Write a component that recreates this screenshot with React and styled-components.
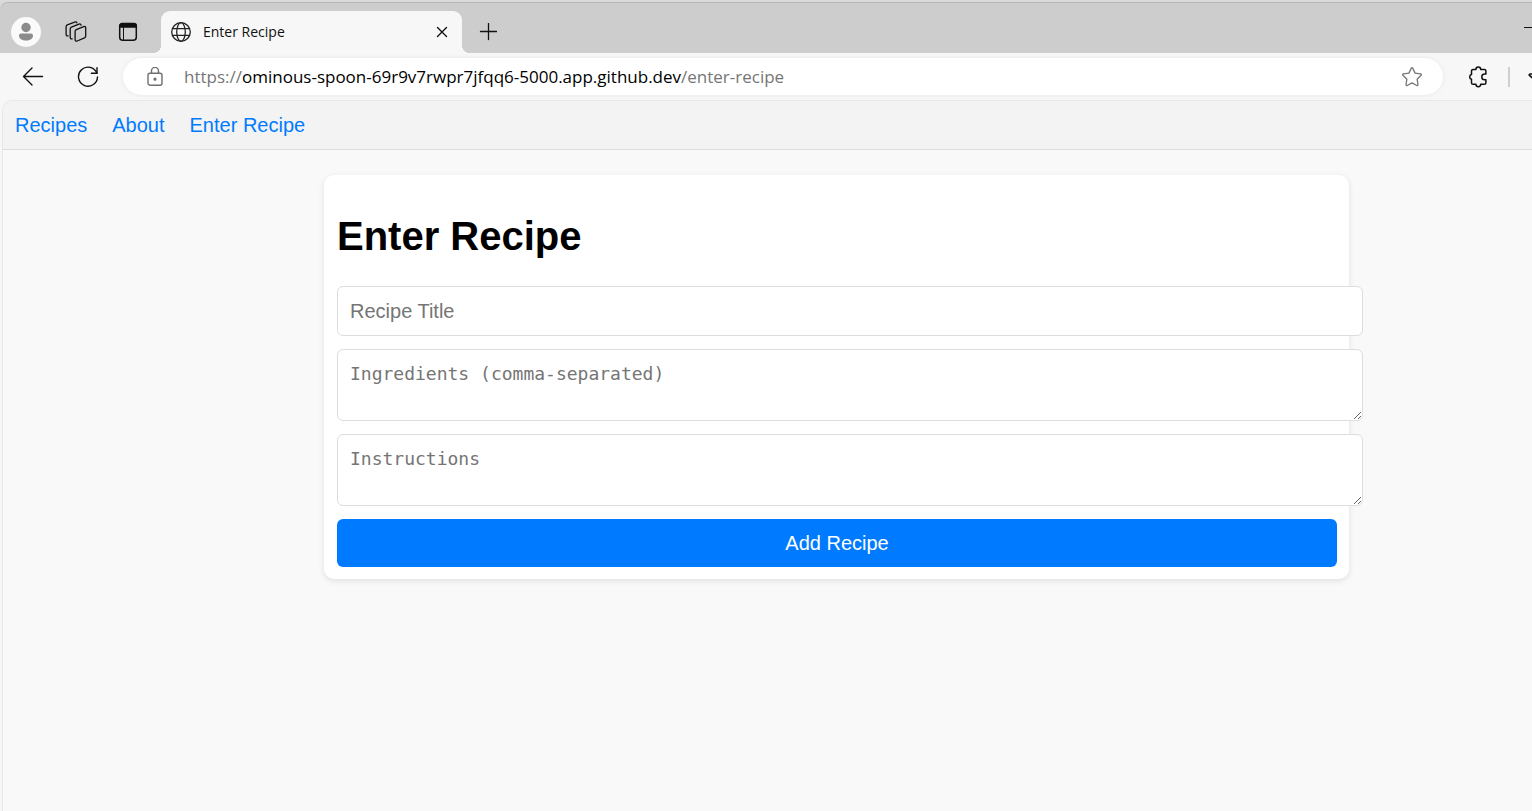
import React from "react";
import styled, { createGlobalStyle } from "styled-components";

const GlobalStyle = createGlobalStyle`
  body {
    margin: 0;
    overflow-x: hidden;
    background: #f7f7f7;
    font-family: "Liberation Sans", Arial, sans-serif;
  }
`;

const Browser = styled.div`
  display: flex;
  flex-direction: column;
  min-height: 100vh;
  overflow: hidden;
`;

const TopEdge = styled.div`
  padding-top: 2px;
  background: #dadada;
`;

const TabStrip = styled.div`
  box-sizing: border-box;
  display: flex;
  align-items: flex-end;
  height: 51px;
  padding-left: 11px;
  border-top: 1px solid #b6b6b6;
  border-top-left-radius: 8px;
  background: #cdcdcd;
`;

const IconButton = styled.button`
  display: flex;
  flex: none;
  align-items: center;
  justify-content: center;
  width: ${(p) => p.$width || 30}px;
  height: ${(p) => p.$height || 42}px;
  padding: 0;
  border: 0;
  background: transparent;
  color: ${(p) => p.$color || "#111"};

  svg {
    display: block;
    flex: none;
  }
`;

const StripButtons = styled.div`
  display: flex;
  gap: 22px;
`;

const Tab = styled.div`
  position: relative;
  box-sizing: border-box;
  display: flex;
  align-items: center;
  width: 301px;
  height: 42px;
  margin-left: 16px;
  padding: 0 5px 0 9px;
  border-radius: 9px 9px 0 0;
  background: #f7f7f7;

  &::before,
  &::after {
    content: "";
    position: absolute;
    bottom: 0;
    width: 8px;
    height: 8px;
  }
  &::before {
    right: 100%;
    background: radial-gradient(circle at 0 0, #cdcdcd 8px, #f7f7f7 8px);
  }
  &::after {
    left: 100%;
    background: radial-gradient(circle at 100% 0, #cdcdcd 8px, #f7f7f7 8px);
  }
`;

const TabTitle = styled.span`
  flex: 1;
  margin-left: 11px;
  font: 14px/20px "Open Sans", "Noto Sans", sans-serif;
  color: #111;
`;

const WindowControls = styled.div`
  display: flex;
  margin-left: auto;
  margin-right: -2px;
`;

const Toolbar = styled.div`
  display: flex;
  align-items: center;
  height: 47px;
  padding-left: 18px;
`;

const ToolbarButtons = styled.div`
  display: flex;
  gap: 25px;
`;

const AddressBar = styled.div`
  display: flex;
  flex: 1;
  align-items: center;
  height: 37px;
  margin: 0 20px;
  padding: 0 16px 0 17px;
  border-radius: 19px;
  background: #fff;
  box-shadow: 0 0 5px rgba(0, 0, 0, 0.07);
`;

const Address = styled.div`
  flex: 1;
  margin-left: 14px;
  font: 17px/24px "Open Sans", "Noto Sans", sans-serif;
  color: #767676;
  white-space: nowrap;
`;

const Host = styled.span`
  color: #000;
`;

const Divider = styled.span`
  width: 2px;
  height: 20px;
  margin-left: 15px;
  margin-right: 18px;
  background: #cfcfcf;
`;

const Page = styled.div`
  flex: 1;
  margin-left: 2px;
  border: solid #e8e8e8;
  border-width: 1px 0 0 1px;
  border-top-left-radius: 10px;
  overflow: hidden;
  background: #f9f9f9;
`;

const Nav = styled.nav`
  display: flex;
  gap: 25px;
  padding: 12px;
  border-bottom: 1px solid #ddd;
  background: #f3f3f3;
`;

const NavLink = styled.a`
  font-size: 20px;
  line-height: 24px;
  color: #007bff;
  text-decoration: none;
`;

/* The page is wider than the visible part of the window, so its centre lies right of the middle. */
const Content = styled.main`
  margin-right: -138px;
  padding: 25px 0;
`;

const Card = styled.section`
  box-sizing: border-box;
  max-width: 1025px;
  margin: 0 auto;
  padding: 12px 12px 12px 13px;
  border-radius: 10px;
  background: #fff;
  box-shadow: 0 2px 6px rgba(0, 0, 0, 0.1);
`;

const Title = styled.h1`
  margin: 26px 0 27px;
  font-size: 40px;
  line-height: 46px;
  color: #000;
`;

const Form = styled.form`
  display: flex;
  flex-direction: column;
  align-items: flex-start;
  gap: 13px;
`;

const TextInput = styled.input`
  width: 100%;
  height: 24px;
  padding: 12px;
  border: 1px solid #ddd;
  border-radius: 6px;
  background: #fff;
  font: 20px/24px "Liberation Sans", Arial, sans-serif;

  &::placeholder {
    color: #757575;
  }
`;

const TextArea = styled.textarea`
  display: block;
  width: 100%;
  height: 46px;
  padding: 12px;
  border: 1px solid #ddd;
  border-radius: 6px;
  background: #fff;
  font: 18px/23px "DejaVu Sans Mono", monospace;

  &::placeholder {
    color: #757575;
  }
`;

const SubmitButton = styled.button`
  width: 100%;
  height: 48px;
  padding: 0 12px;
  border: 0;
  border-radius: 6px;
  background: #007bff;
  color: #fff;
  font: 20px/24px "Liberation Sans", Arial, sans-serif;
`;

const Svg = ({ width = 24, height = 24, stroke = 1.4, children }) => (
  <svg
    width={width}
    height={height}
    viewBox={`0 0 ${width} ${height}`}
    fill="none"
    stroke="currentColor"
    strokeWidth={stroke}
    strokeLinecap="round"
    strokeLinejoin="round"
    aria-hidden="true"
  >
    {children}
  </svg>
);

const ProfileIcon = () => (
  <Svg width={30} height={30} stroke={0}>
    <circle cx="15" cy="15" r="15" fill="#fafafa" />
    <circle cx="15" cy="10.5" r="4.7" fill="#8b8b8b" />
    <path d="M10 16.500h10a2 2 0 0 1 2 2c0 3.200-3 5-7 5s-7-1.800-7-5a2 2 0 0 1 2-2z" fill="#8b8b8b" />
  </Svg>
);

const WorkspacesIcon = () => (
  <Svg width={22} height={22} stroke={1.3}>
    <path d="M11.300 8.700l7.400-3.100c1.200-.5 2 .1 2 1.300v8c0 .9-.4 1.500-1.200 1.900l-7.300 3.200c-1.200.5-2.100-.1-2.100-1.300v-8c0-.9.400-1.600 1.200-2z" />
    <path d="M7.200 17.800c-1.300.3-2-.3-2-1.500V8.200c0-.9.400-1.600 1.200-2l7.500-3.100c1.100-.5 2 0 2.200 1.100" />
    <path d="M3.100 14.800c-1.300.3-2-.3-2-1.500V5.800c0-.9.400-1.600 1.200-2L9.700 1.100c1.100-.5 1.900-.1 2.200.8" />
  </Svg>
);

const TabActionsIcon = () => (
  <Svg width={20} height={20} stroke={1.5}>
    <rect x="1.700" y="1.700" width="16.600" height="16.600" rx="3" />
    <path d="M1.700 5V4a2.500 2.500 0 0 1 2.500-2.500h11.600A2.500 2.500 0 0 1 18.300 4v1z" fill="currentColor" />
    <path d="M5.500 5v13" strokeWidth="1" />
  </Svg>
);

const GlobeIcon = () => (
  <Svg width={22} height={22} stroke={1.3}>
    <g stroke="#222">
      <circle cx="11" cy="11" r="9.300" />
      <ellipse cx="11" cy="11" rx="4.300" ry="9.300" />
      <path d="M2.600 7.600h16.800M2.600 14.400h16.800" />
    </g>
  </Svg>
);

const CloseIcon = () => (
  <Svg width={12} height={12} stroke={1.4}>
    <path d="M1.500 1.500l9 9M10.500 1.500l-9 9" />
  </Svg>
);

const PlusIcon = () => (
  <Svg width={18} height={18} stroke={1.3}>
    <path d="M9.500 0.500v16M1.500 8.500h16" />
  </Svg>
);

const MinimizeIcon = () => (
  <Svg width={10} height={12} stroke={1}>
    <path d="M0 5.500h10" />
  </Svg>
);

const BackIcon = () => (
  <Svg width={22} height={20} stroke={1.4}>
    <path d="M20.500 9.500H1.500M10 1L1.500 9.500l8.500 8.500" />
  </Svg>
);

const ReloadIcon = () => (
  <Svg width={22} height={22} stroke={1.4}>
    <path d="M19.900 7.300A9.500 9.500 0 1 0 20.500 11" />
    <path d="M20 1.700v5.600h-5.600" />
  </Svg>
);

const LockIcon = () => (
  <Svg width={16} height={20} stroke={1.4}>
    <rect x="1" y="6.200" width="14" height="12" rx="2" />
    <path d="M4.500 6V3.900a3.500 3.500 0 0 1 7 0V6" />
    <circle cx="8" cy="12.200" r="0.900" fill="currentColor" />
  </Svg>
);

const StarIcon = () => (
  <Svg width={22} height={22} stroke={1.3}>
    <path d="M10.300 2.100c.3-.6 1.100-.6 1.400 0l2.400 5 5.500.8c.7.1 1 .9.500 1.400l-4 3.900.9 5.400c.1.700-.6 1.200-1.200.9L11 16.900l-4.800 2.600c-.6.300-1.300-.2-1.200-.9l.9-5.400-4-3.900c-.5-.5-.2-1.300.5-1.400l5.500-.8z" />
  </Svg>
);

const ExtensionsIcon = () => (
  <Svg width={22} height={22} stroke={1.5}>
    <path d="M8.900 3.500a2.400 2.400 0 0 1 4.800 0h3.600a1.600 1.600 0 0 1 1.600 1.600v3h-1.300a2.800 2.800 0 0 0 0 5.600h1.300v3a1.600 1.600 0 0 1-1.600 1.600h-3.600a2.400 2.400 0 0 1-4.800 0H6.100a1.600 1.600 0 0 1-1.600-1.600v-3.400a2.500 2.500 0 0 1 0-4.800V5.100a1.600 1.600 0 0 1 1.600-1.600z" />
  </Svg>
);

const FavoritesIcon = () => (
  <Svg width={4} height={20} stroke={1.6}>
    <path d="M6 7H2.500c-1.300 0-1.600 1-.8 1.700L5 11.500" />
  </Svg>
);

export default function App() {
  return (
    <Browser>
      <GlobalStyle />
      <TopEdge>
        <TabStrip>
          <StripButtons>
            <IconButton aria-label="Profile"><ProfileIcon /></IconButton>
            <IconButton $width={26} aria-label="Workspaces"><WorkspacesIcon /></IconButton>
            <IconButton $width={34} aria-label="Tab actions"><TabActionsIcon /></IconButton>
          </StripButtons>
          <Tab>
            <GlobeIcon />
            <TabTitle>Enter Recipe</TabTitle>
            <IconButton aria-label="Close tab"><CloseIcon /></IconButton>
          </Tab>
          <IconButton $width={52} aria-label="New tab"><PlusIcon /></IconButton>
          <WindowControls>
            <IconButton $width={10} $height={50} aria-label="Minimize"><MinimizeIcon /></IconButton>
          </WindowControls>
        </TabStrip>
      </TopEdge>
      <Toolbar>
        <ToolbarButtons>
          <IconButton aria-label="Back"><BackIcon /></IconButton>
          <IconButton aria-label="Reload"><ReloadIcon /></IconButton>
        </ToolbarButtons>
        <AddressBar>
          <IconButton $color="#6e6e6e" $height={30} aria-label="Site information"><LockIcon /></IconButton>
          <Address>
            https://<Host>ominous-spoon-69r9v7rwpr7jfqq6-5000.app.github.dev</Host>/enter-recipe
          </Address>
          <IconButton $color="#767676" $height={30} aria-label="Add to favorites"><StarIcon /></IconButton>
        </AddressBar>
        <IconButton aria-label="Extensions"><ExtensionsIcon /></IconButton>
        <Divider />
        <IconButton $width={4} aria-label="Favorites"><FavoritesIcon /></IconButton>
      </Toolbar>
      <Page>
        <Nav>
          <NavLink href="#recipes">Recipes</NavLink>
          <NavLink href="#about">About</NavLink>
          <NavLink href="#enter-recipe">Enter Recipe</NavLink>
        </Nav>
        <Content>
          <Card>
            <Title>Enter Recipe</Title>
            <Form onSubmit={(e) => e.preventDefault()}>
              <TextInput type="text" aria-label="Recipe Title" placeholder="Recipe Title" />
              <TextArea aria-label="Ingredients" placeholder="Ingredients (comma-separated)" />
              <TextArea aria-label="Instructions" placeholder="Instructions" />
              <SubmitButton type="submit">Add Recipe</SubmitButton>
            </Form>
          </Card>
        </Content>
      </Page>
    </Browser>
  );
}
